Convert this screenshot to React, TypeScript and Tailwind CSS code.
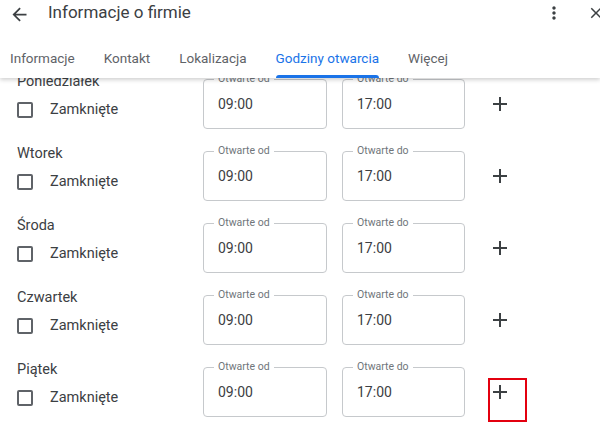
import React from 'react';

const tabs = ['Informacje', 'Kontakt', 'Lokalizacja', 'Godziny otwarcia', 'Więcej'];

const days = [
  { name: 'Poniedziałek', from: '09:00', to: '17:00' },
  { name: 'Wtorek', from: '09:00', to: '17:00' },
  { name: 'Środa', from: '09:00', to: '17:00' },
  { name: 'Czwartek', from: '09:00', to: '17:00' },
  { name: 'Piątek', from: '09:00', to: '17:00' },
];

const TimeField: React.FC<{ label: string; value: string; width: string }> = ({ label, value, width }) => (
  <div className={`relative h-[50px] ${width} border border-[#c6c9cc] rounded-[4px] flex items-center pl-[14px]`}>
    <span className="absolute -top-[8px] left-[10px] px-[4px] bg-white text-[10.5px] leading-[14px] text-[#70757a]">
      {label}
    </span>
    <span className="text-[14px] text-[#3c4043]">{value}</span>
  </div>
);

const DayRow: React.FC<{ name: string; from: string; to: string; marked?: boolean }> = ({ name, from, to, marked }) => (
  <div className="flex items-start h-[72px]">
    <div className="w-[203px] pl-[17px] pt-[1px]">
      <div className="text-[14.5px] leading-[20px] text-[#3c4043]">{name}</div>
      <label className="mt-[6px] h-[24px] flex items-center">
        <span className="w-[16px] h-[16px] border-2 border-[#5f6368] rounded-[2px]" />
        <span className="ml-[17px] text-[14.5px] text-[#3c4043]">Zamknięte</span>
      </label>
    </div>
    <div className="mt-[8px] flex items-start">
      <TimeField label="Otwarte od" value={from} width="w-[124px]" />
      <div className="ml-[15px]">
        <TimeField label="Otwarte do" value={to} width="w-[123px]" />
      </div>
      <button className="relative ml-[15px] w-[40px] h-[50px] flex items-center justify-center">
        <svg width="24" height="24" viewBox="0 0 24 24" fill="#3c4043">
          <path d="M19 13h-6v6h-2v-6H5v-2h6V5h2v6h6v2z" />
        </svg>
        {marked && (
          <span className="absolute left-[8px] top-[11px] w-[39px] h-[44px] border-[2.5px] border-[#e3000f] pointer-events-none" />
        )}
      </button>
    </div>
  </div>
);

export default function App() {
  return (
    <div className="w-[600px] h-[432px] bg-white overflow-hidden flex flex-col font-[Roboto,Arial,sans-serif]">
      {/* Header */}
      <div className="relative z-10 h-[78px] shrink-0 bg-white shadow-[0_2px_4px_rgba(0,0,0,0.18)]">
        <div className="h-[25px] flex items-center overflow-visible">
          <svg className="ml-[9px] mt-[3px]" width="21" height="21" viewBox="0 0 24 24" fill="#3c4043">
            <path d="M20 11H7.83l5.59-5.59L12 4l-8 8 8 8 1.41-1.41L7.83 13H20v-2z" />
          </svg>
          <h1 className="ml-[18px] text-[17px] text-[#3c4043]">Informacje o firmie</h1>
          <div className="ml-auto flex items-center">
            <svg width="20" height="20" viewBox="0 0 24 24" fill="#3c4043">
              <path d="M12 8c1.1 0 2-.9 2-2s-.9-2-2-2-2 .9-2 2 .9 2 2 2zm0 2c-1.1 0-2 .9-2 2s.9 2 2 2 2-.9 2-2-.9-2-2-2zm0 6c-1.1 0-2 .9-2 2s.9 2 2 2 2-.9 2-2-.9-2-2-2z" />
            </svg>
            <svg className="ml-[23px] mr-[-5px]" width="18" height="18" viewBox="0 0 24 24" fill="#3c4043">
              <path d="M19 6.41 17.59 5 12 10.59 6.41 5 5 6.41 10.59 12 5 17.59 6.41 19 12 13.41 17.59 19 19 17.59 13.41 12z" />
            </svg>
          </div>
        </div>
        <nav className="mt-[13px] h-[40px] flex items-stretch pl-[10px] gap-[29px]">
          {tabs.map((t, i) => {
            const active = i === 3;
            return (
              <div key={t} className="relative flex items-center">
                <span className={`text-[13.5px] ${active ? 'text-[#1a73e8]' : 'text-[#5f6368]'}`}>{t}</span>
                {active && (
                  <span className="absolute left-0 right-0 bottom-0 h-[3px] rounded-t-[3px] bg-[#1a73e8]" />
                )}
              </div>
            );
          })}
        </nav>
      </div>

      {/* Hours list (scrolled a bit) */}
      <div className="flex-1 overflow-hidden">
        <div className="mt-[-7px]">
          {days.map((d, i) => (
            <DayRow key={d.name} name={d.name} from={d.from} to={d.to} marked={i === days.length - 1} />
          ))}
        </div>
      </div>
    </div>
  );
}
